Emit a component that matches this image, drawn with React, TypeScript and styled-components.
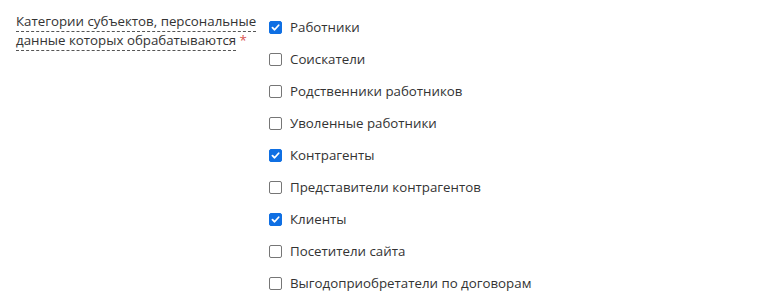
import React from 'react';
import styled, { createGlobalStyle } from 'styled-components';

const GlobalStyle = createGlobalStyle`
  body {
    margin: 0;
    background: #ffffff;
    font-family: 'Open Sans', 'Liberation Sans', sans-serif;
    color: #333333;
  }
`;

const categories = [
  { title: 'Работники', checked: true },
  { title: 'Соискатели', checked: false },
  { title: 'Родственники работников', checked: false },
  { title: 'Уволенные работники', checked: false },
  { title: 'Контрагенты', checked: true },
  { title: 'Представители контрагентов', checked: false },
  { title: 'Клиенты', checked: true },
  { title: 'Посетители сайта', checked: false },
  { title: 'Выгодоприобретатели по договорам', checked: false },
];

const App: React.FC = () => {
  return (
    <>
      <GlobalStyle />
      <FormRow>
        <FieldLabel>
          <Hint>Категории субъектов, персональные данные которых обрабатываются</Hint>{' '}
          <Required>*</Required>
        </FieldLabel>
        <CheckList>
          {categories.map((item) => (
            <CheckItem key={item.title}>
              <Box checked={item.checked}>
                {item.checked && (
                  <svg width="9" height="9" viewBox="0 0 10 10">
                    <path
                      d="M1.6 5.2 L4 7.5 L8.5 2.5"
                      fill="none"
                      stroke="#fff"
                      strokeWidth="2"
                      strokeLinecap="round"
                      strokeLinejoin="round"
                    />
                  </svg>
                )}
              </Box>
              <ItemText>{item.title}</ItemText>
            </CheckItem>
          ))}
        </CheckList>
      </FormRow>
    </>
  );
};

const FormRow = styled.div`
  display: flex;
  align-items: flex-start;
  padding: 11px 0 0 16px;
`;

const FieldLabel = styled.div`
  width: 243px;
  flex-shrink: 0;
  font-size: 13.3px;
  line-height: 19px;
  color: #333333;
  padding-top: 1px;
`;

const Hint = styled.span`
  border-bottom: 1px dashed #555555;
  padding-bottom: 1px;
`;

const Required = styled.span`
  color: #d9534f;
`;

const CheckList = styled.div`
  display: flex;
  flex-direction: column;
  margin-left: 10px;
`;

const CheckItem = styled.label`
  display: flex;
  align-items: center;
  height: 32px;
  gap: 8px;
  cursor: pointer;
`;

const Box = styled.span<{ checked: boolean }>`
  width: 13px;
  height: 13px;
  box-sizing: border-box;
  border-radius: 2px;
  display: flex;
  align-items: center;
  justify-content: center;
  background: ${(props) => (props.checked ? '#0f6fe3' : '#ffffff')};
  border: 1px solid ${(props) => (props.checked ? '#0f6fe3' : '#767676')};
`;

const ItemText = styled.span`
  font-size: 13.3px;
  color: #333333;
`;

export default App;
